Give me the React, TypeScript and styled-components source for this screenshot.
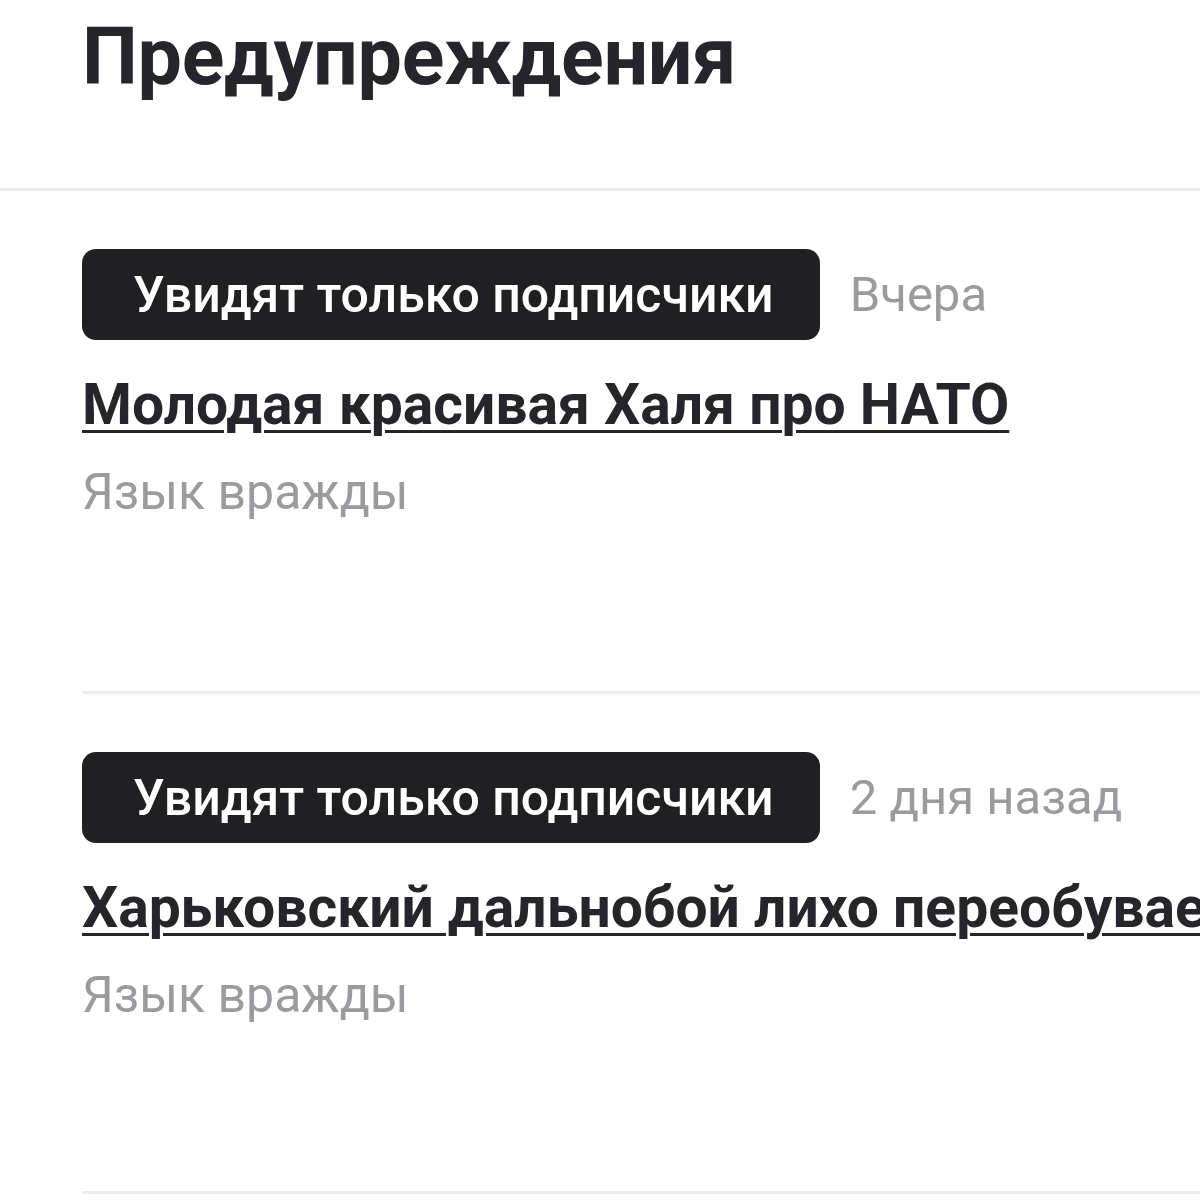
import React from 'react';
import styled, { createGlobalStyle } from 'styled-components';

const GlobalStyle = createGlobalStyle`
  html, body {
    margin: 0;
    padding: 0;
    background: #ffffff;
  }

  body {
    font-family: Roboto, 'Noto Sans', 'Liberation Sans', sans-serif;
    overflow: hidden;
  }
`;

const Page = styled.div`
  width: 1200px;
  height: 1200px;
  overflow: hidden;
  background: #ffffff;
`;

const Header = styled.header`
  height: 191px;
  padding-left: 82px;
  box-sizing: border-box;
  border-bottom: 3px solid #e9e9ea;
`;

const Title = styled.h1`
  margin: 0;
  padding-top: 9px;
  font-size: 79px;
  line-height: 96px;
  font-weight: 700;
  color: #25252b;
  letter-spacing: -0.3px;
`;

const List = styled.div`
  display: flex;
  flex-direction: column;
  padding-left: 82px;
`;

const Item = styled.article<{ $first?: boolean }>`
  display: flex;
  flex-direction: column;
  height: 500px;
  box-sizing: border-box;
  padding-top: 58px;
  border-top: ${(p) => (p.$first ? 'none' : '3px solid #ececed')};
`;

const Meta = styled.div`
  display: flex;
  align-items: center;
  gap: 30px;
  white-space: nowrap;
`;

const Badge = styled.span`
  display: inline-flex;
  align-items: center;
  height: 91px;
  padding: 0 46px 0 51px;
  box-sizing: border-box;
  border-radius: 14px;
  background: #202022;
  color: #ffffff;
  font-size: 50px;
  font-weight: 500;
`;

const When = styled.span`
  font-size: 49px;
  font-weight: 400;
  color: #9b9b9f;
`;

const PostLink = styled.a`
  display: block;
  margin-top: 30px;
  font-size: 57px;
  line-height: 70px;
  font-weight: 700;
  color: #25252b;
  text-decoration: underline;
  text-decoration-thickness: 3px;
  text-underline-offset: 6px;
  white-space: nowrap;
`;

const Reason = styled.div`
  margin-top: 22px;
  font-size: 50px;
  line-height: 60px;
  color: #9b9b9f;
`;

const warnings = [
  {
    when: 'Вчера',
    title: 'Молодая красивая Халя про НАТО',
    reason: 'Язык вражды',
  },
  {
    when: '2 дня назад',
    title: 'Харьковский дальнобой лихо переобувается',
    reason: 'Язык вражды',
  },
];

const App = () => (
  <Page>
    <GlobalStyle />
    <Header>
      <Title>Предупреждения</Title>
    </Header>
    <List>
      {warnings.map((w, i) => (
        <Item key={i} $first={i === 0}>
          <Meta>
            <Badge>Увидят только подписчики</Badge>
            <When>{w.when}</When>
          </Meta>
          <PostLink href="#">{w.title}</PostLink>
          <Reason>{w.reason}</Reason>
        </Item>
      ))}
      <Item />
    </List>
  </Page>
);

export default App;
